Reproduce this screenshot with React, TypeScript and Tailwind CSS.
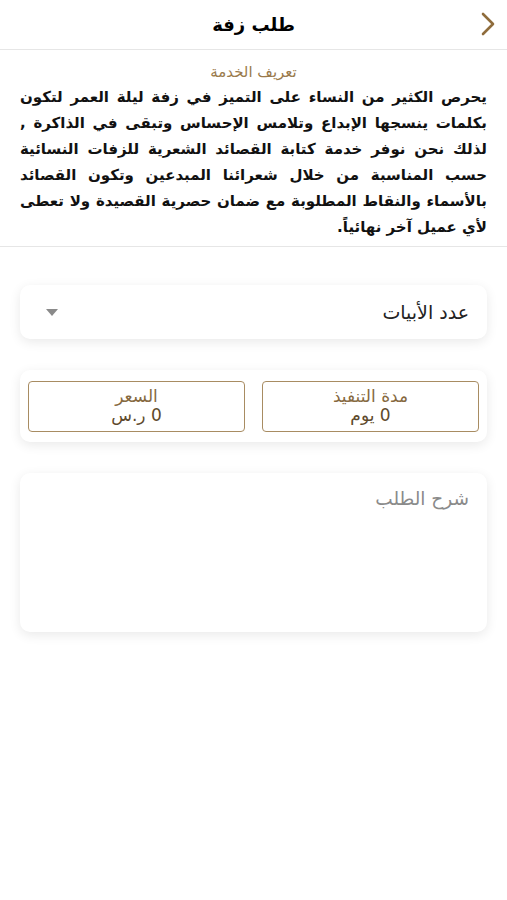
import React, { useState } from 'react';

const GOLD = 'text-[#9a7a4c]';

function InfoBox({ label, value }: { label: string; value: string }) {
  return (
    <div className="flex-1 h-[51px] border border-[#a88c62] rounded-[4px] flex flex-col items-center justify-center leading-[19px]">
      <span className="text-[17px] text-[#86693f]">{label}</span>
      <span className="text-[17px] text-[#5e4a2c]">{value}</span>
    </div>
  );
}

export default function App() {
  const [notes, setNotes] = useState('');

  return (
    <div dir="rtl" className="w-[507px] h-[900px] bg-white font-['DejaVu_Sans',sans-serif] text-black overflow-hidden">
      {/* header */}
      <div className="relative h-[50px] border-b border-[#e6e6e6] flex items-center justify-center">
        <button className="absolute right-[4px] top-[9px] w-[30px] h-[30px] flex items-center justify-center">
          <svg width="14" height="24" viewBox="0 0 14 24" fill="none">
            <path d="M2 2l10 10L2 22" stroke="#8f6c3c" strokeWidth="2.6" strokeLinecap="round" strokeLinejoin="round" />
          </svg>
        </button>
        <h1 className="text-[18px] font-bold">طلب زفة</h1>
      </div>

      {/* service description */}
      <div className="border-b border-[#e6e6e6] px-[20px] pt-[10px] pb-[6px]">
        <h2 className={`text-center text-[15px] ${GOLD} leading-[24px]`}>تعريف الخدمة</h2>
        <p className="text-[15px] font-bold leading-[26px] text-justify text-[#111]">
          يحرص الكثير من النساء على التميز في زفة ليلة العمر لتكون بكلمات ينسجها الإبداع وتلامس الإحساس وتبقى في الذاكرة , لذلك نحن نوفر خدمة كتابة القصائد الشعرية للزفات النسائية حسب المناسبة من خلال شعرائنا المبدعين وتكون القصائد بالأسماء والنقاط المطلوبة مع ضمان حصرية القصيدة ولا تعطى لأي عميل آخر نهائياً.
        </p>
      </div>

      <div className="px-[20px] pt-[38px] flex flex-col gap-[31px]">
        {/* verses select */}
        <div className="h-[54px] bg-white rounded-[10px] shadow-[0_3px_12px_rgba(0,0,0,0.09)] flex items-center justify-between pr-[18px] pl-[26px]">
          <span className="text-[19px] text-[#222]">عدد الأبيات</span>
          <svg width="12" height="7" viewBox="0 0 12 7">
            <path d="M0 0h12L6 7z" fill="#8a8a8a" />
          </svg>
        </div>

        {/* duration + price */}
        <div className="h-[72px] bg-white rounded-[10px] shadow-[0_3px_12px_rgba(0,0,0,0.09)] flex items-center gap-[17px] px-[8px]">
          <InfoBox label="مدة التنفيذ" value="0 يوم" />
          <InfoBox label="السعر" value="0 ر.س" />
        </div>

        {/* notes */}
        <div className="h-[159px] bg-white rounded-[10px] shadow-[0_3px_12px_rgba(0,0,0,0.09)] px-[18px] pt-[12px]">
          <textarea
            value={notes}
            onChange={(e) => setNotes(e.target.value)}
            placeholder="شرح الطلب"
            className="w-full h-full resize-none outline-none text-[18.5px] placeholder:text-[#8a8a8a] bg-transparent"
          />
        </div>
      </div>
    </div>
  );
}
